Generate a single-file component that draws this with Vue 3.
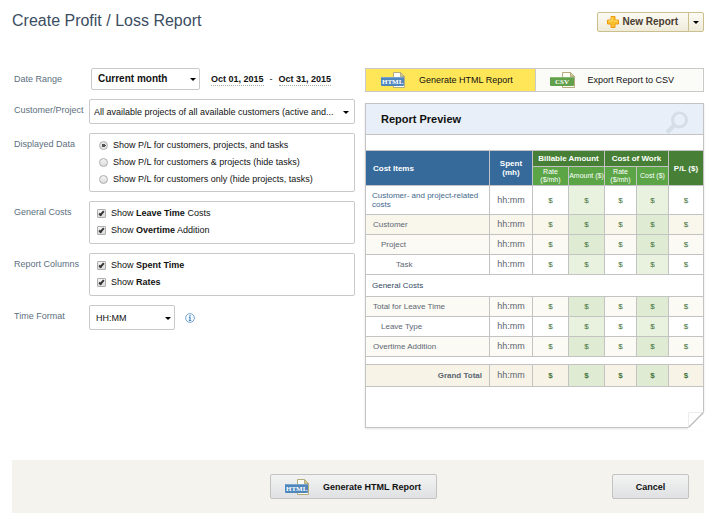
<script setup>
import { ref } from 'vue'

const displayed = ref('tasks')
const displayOptions = [
  { value: 'tasks', label: 'Show P/L for customers, projects, and tasks' },
  { value: 'projects', label: 'Show P/L for customers & projects (hide tasks)' },
  { value: 'customers', label: 'Show P/L for customers only (hide projects, tasks)' }
]
const costs = ref([
  { id: 'leave', strong: 'Leave Time', rest: ' Costs', on: true },
  { id: 'overtime', strong: 'Overtime', rest: ' Addition', on: true }
])
const columns = ref([
  { id: 'spent', strong: 'Spent Time', rest: '', on: true },
  { id: 'rates', strong: 'Rates', rest: '', on: true }
])
const rows = [
  { label: 'Customer- and project-related costs', kind: 'section tall' },
  { label: 'Customer', kind: 'cream' },
  { label: 'Project', kind: 'pale level-1' },
  { label: 'Task', kind: 'level-2' },
  { label: 'General Costs', kind: 'section heading', span: true },
  { label: 'Total for Leave Time', kind: 'pale' },
  { label: 'Leave Type', kind: 'level-1' },
  { label: 'Overtime Addition', kind: 'pale' },
  { label: '', kind: 'spacer', span: true },
  { label: 'Grand Total', kind: 'total' }
]
</script>

<template>
  <div class="page">
    <header class="top">
      <h1>Create Profit / Loss Report</h1>
      <div class="split">
        <button type="button" class="new">
          <svg width="12" height="12" viewBox="0 0 12 12" aria-hidden="true">
            <path d="M4 .5h4v3.500h3.500v4H8v3.500H4V8H.5V4H4z" fill="#fcc02c" stroke="#eb9a14" />
            <path d="M5 1.500v3.500H1.500M7 5h3.500" fill="none" stroke="#ffe27a" />
          </svg>
          New Report
        </button>
        <button type="button" class="more" aria-label="More"><span class="caret"></span></button>
      </div>
    </header>

    <main class="body">
      <form class="form" @submit.prevent>
        <label class="name" for="range">Date Range</label>
        <div class="line">
          <span class="pick range">
            <select id="range"><option>Current month</option></select>
          </span>
          <span class="dates">
            <button type="button" class="date">Oct 01, 2015</button>
            <span>-</span>
            <button type="button" class="date">Oct 31, 2015</button>
          </span>
        </div>

        <label class="name" for="project">Customer/Project</label>
        <span class="pick project">
          <select id="project">
            <option>All available projects of all available customers (active and...</option>
          </select>
        </span>

        <span id="displayed" class="name">Displayed Data</span>
        <div class="box radios" role="radiogroup" aria-labelledby="displayed">
          <label v-for="o in displayOptions" :key="o.value" class="choice">
            <input v-model="displayed" type="radio" name="displayed" :value="o.value" />
            <span>{{ o.label }}</span>
          </label>
        </div>

        <span id="costs" class="name">General Costs</span>
        <div class="box" role="group" aria-labelledby="costs">
          <label v-for="c in costs" :key="c.id" class="choice">
            <input v-model="c.on" type="checkbox" />
            <span>Show <b>{{ c.strong }}</b>{{ c.rest }}</span>
          </label>
        </div>

        <span id="columns" class="name">Report Columns</span>
        <div class="box" role="group" aria-labelledby="columns">
          <label v-for="c in columns" :key="c.id" class="choice">
            <input v-model="c.on" type="checkbox" />
            <span>Show <b>{{ c.strong }}</b>{{ c.rest }}</span>
          </label>
        </div>

        <label class="name" for="format">Time Format</label>
        <div class="line">
          <span class="pick format">
            <select id="format"><option>HH:MM</option></select>
          </span>
          <svg class="info" width="10" height="10" viewBox="0 0 10 10" aria-hidden="true">
            <circle cx="5" cy="5" r="4.4" fill="#f4f9fd" stroke="#6f9fcb" stroke-width=".9" />
            <path d="M5 2v1.3M4 4.4h1V7.4M3.9 7.5h2.3" fill="none" stroke="#4a84bd" stroke-width="1.1" />
          </svg>
        </div>
      </form>

      <section class="side">
        <div class="actions">
          <button type="button" class="html">
            <svg class="file" width="25" height="16" viewBox="0 0 25 16" aria-hidden="true">
              <path d="M12.5.5h7l4 4v11h-11z" fill="#fffef4" stroke="#b5ab7c" />
              <path d="M19.5.5v4h4z" fill="#d8cf9f" stroke="#b5ab7c" />
              <rect x="0" y="5" width="23" height="9" rx="1" fill="#4f87bd" />
              <path d="M1 5.500h21" stroke="#78a5d0" />
              <text x="1" y="12" class="tag">HTML</text>
            </svg>
            <span>Generate HTML Report</span>
          </button>
          <button type="button" class="csv">
            <svg class="file" width="25" height="16" viewBox="0 0 25 16" aria-hidden="true">
              <path d="M12.5.5h8l4 4v11h-12z" fill="#fffef4" stroke="#b5ab7c" />
              <path d="M20.5.5v4h4z" fill="#d8cf9f" stroke="#b5ab7c" />
              <rect x="0" y="5" width="24" height="9" rx="1" fill="#62a04b" />
              <path d="M1 5.500h22" stroke="#86ba70" />
              <text x="5" y="12" class="tag">CSV</text>
            </svg>
            <span>Export Report to CSV</span>
          </button>
        </div>

        <div class="preview">
          <div class="preview-head">
            <h2>Report Preview</h2>
            <svg width="24" height="23" viewBox="0 0 24 23" aria-hidden="true">
              <circle cx="14.5" cy="9" r="7" fill="none" stroke="#d5dde6" stroke-width="3" />
              <path d="M11 5.500a5 5 0 0 1 7-.5" fill="none" stroke="#f1f5fa" />
              <path d="M9.500 14L2 21.500" stroke="#d5dde6" stroke-width="4" />
            </svg>
          </div>
          <table>
            <colgroup>
              <col /><col class="w-spent" /><col class="w-bill" /><col class="w-bill" />
              <col class="w-cost" /><col class="w-cost" /><col class="w-pl" />
            </colgroup>
            <thead>
              <tr class="group">
                <th rowspan="2" class="blue left">Cost Items</th>
                <th rowspan="2" class="blue">Spent<br />(mh)</th>
                <th colspan="2" class="dark">Billable Amount</th>
                <th colspan="2" class="dark">Cost of Work</th>
                <th rowspan="2" class="dark">P/L ($)</th>
              </tr>
              <tr class="sub">
                <th>Rate<br />($/mh)</th>
                <th>Amount ($)</th>
                <th>Rate<br />($/mh)</th>
                <th>Cost ($)</th>
              </tr>
            </thead>
            <tbody>
              <tr v-for="r in rows" :key="r.label" :class="r.kind">
                <td :colspan="r.span ? 7 : 1" class="item">{{ r.label }}</td>
                <template v-if="!r.span">
                  <td class="hours">hh:mm</td>
                  <td v-for="n in 5" :key="n" :class="{ tint: n === 2 || n === 4 }">$</td>
                </template>
              </tr>
            </tbody>
          </table>
          <svg class="fold" width="18" height="18" viewBox="0 0 18 18" aria-hidden="true">
            <path d="M0 0h15L18 0v18H0V15z" fill="#fff" />
            <path d="M.5 15V.5H15" fill="none" stroke="#ececec" />
            <path d="M.5 15.500L15.500 .5" stroke="#b9b9b9" stroke-width="1.300" />
          </svg>
        </div>
      </section>
    </main>

    <footer class="bar">
      <span></span>
      <button type="button" class="soft wide">
        <svg class="file" width="25" height="16" viewBox="0 0 25 16" aria-hidden="true">
          <path d="M12.5.5h7l4 4v11h-11z" fill="#fffef4" stroke="#b5ab7c" />
          <path d="M19.5.5v4h4z" fill="#d8cf9f" stroke="#b5ab7c" />
          <rect x="0" y="5" width="23" height="9" rx="1" fill="#4f87bd" />
          <path d="M1 5.500h21" stroke="#78a5d0" />
          <text x="1" y="12" class="tag">HTML</text>
        </svg>
        <span>Generate HTML Report</span>
      </button>
      <button type="button" class="soft cancel">Cancel</button>
    </footer>
  </div>
</template>

<style>
body {
  background: #fff;
}
</style>

<style scoped>
* {
  box-sizing: border-box;
}
.page {
  padding: 12px 10px 12px 12px;
  font: 9px/12px "Liberation Sans", Arial, sans-serif;
  color: #111;
}
button,
select {
  font: inherit;
  color: inherit;
  margin: 0;
}
.top {
  display: flex;
  justify-content: space-between;
  height: 56px;
}
h1 {
  margin: 0;
  font-size: 16px;
  line-height: 18px;
  font-weight: 400;
  color: #3b4d61;
}
.split {
  display: flex;
  height: 20px;
}
.split button {
  display: flex;
  align-items: center;
  justify-content: center;
  gap: 3px;
  border: 1px solid #cbbf8d;
  background: linear-gradient(#fcfbf4, #efebda);
  padding: 0 10px 0 9px;
  color: #4a3c30;
}
.split .new {
  font-size: 10px;
  font-weight: 700;
  border-radius: 2px 0 0 2px;
}
.split .more {
  width: 16px;
  margin-left: -1px;
  padding: 0;
  border-radius: 0 2px 2px 0;
}
.caret,
.pick::after {
  border: 3px solid transparent;
  border-top-color: #000;
  border-bottom: 0;
}
.body {
  display: flex;
  gap: 10px;
  align-items: flex-start;
}
.form {
  flex: 1 1 343px;
  display: grid;
  grid-template-columns: 75px 1fr;
  column-gap: 2px;
  row-gap: 9px;
}
.name {
  padding-left: 2px;
  line-height: 22px;
  height: 22px;
  color: #5c6f80;
}
.line {
  display: flex;
  align-items: center;
}
.pick {
  position: relative;
  display: block;
}
.pick::after {
  content: "";
  position: absolute;
  right: 4px;
  top: 50%;
  margin-top: -1px;
  pointer-events: none;
}
.project::after {
  right: 6px;
}
select {
  appearance: none;
  display: block;
  width: 100%;
  height: 25px;
  padding: 0 4px;
  border: 1px solid #c9c9c9;
  border-radius: 2px;
  background: #fff;
}
.range {
  width: 109px;
  margin-left: 2px;
}
.range select {
  height: 22px;
  padding: 0 6px;
  font-size: 10px;
  font-weight: 700;
}
.format {
  width: 86px;
}
.format select {
  padding: 0 6px;
}
.info {
  margin-left: 10px;
}
.dates {
  display: flex;
  gap: 6px;
  margin-left: 11px;
}
.date {
  padding: 0;
  border: 0;
  border-bottom: 1px dotted #aaa;
  background: none;
  font-weight: 700;
}
.box {
  padding: 3px 7px 4px;
  border: 1px solid #c9c9c9;
  border-radius: 2px;
}
.radios {
  padding: 3px 9px;
}
.choice {
  display: flex;
  align-items: center;
  gap: 5px;
  height: 17px;
  padding-bottom: 1px;
}
input {
  appearance: none;
  flex: none;
  width: 9px;
  height: 9px;
  margin: 0;
  border: 1px solid #adadad;
  border-radius: 1px;
  background: linear-gradient(#f4f4f4, #dcdcdc);
}
input[type="radio"] {
  border-radius: 50%;
}
input[type="radio"]:checked {
  background: radial-gradient(circle, #555 0 2px, #e4e4e4 2px);
}
input[type="checkbox"]:checked::after {
  content: "";
  display: block;
  width: 1px;
  height: 4px;
  margin: 0 0 0 2px;
  border: solid #333;
  border-width: 0 2px 2px 0;
  transform: rotate(40deg);
}
.side {
  flex: 1 1 339px;
}
.actions {
  display: flex;
  margin-bottom: 11px;
  border: 1px solid #c9c9c9;
}
.actions button {
  flex: 1;
  display: flex;
  align-items: center;
  gap: 13px;
  height: 22px;
  padding: 0 0 0 15px;
  border: 0;
  background: #fbfbf8;
}
.actions .html {
  background: #ffe658;
}
.actions .csv {
  padding-left: 14px;
  border-left: 1px solid #c9c9c9;
}
.file {
  flex: none;
}
.tag {
  font: 700 7px "Liberation Serif", serif;
  fill: #fff;
}
.preview {
  position: relative;
  padding-bottom: 40px;
  border: 1px solid #c3c3c3;
  box-shadow: 0 1px 2px #e4e4e4;
}
.preview-head {
  display: flex;
  justify-content: space-between;
  align-items: center;
  height: 31px;
  margin-bottom: 15px;
  padding: 0 14px 0 15px;
  border-bottom: 1px solid #c3c3c3;
  background: #e8eff8;
}
.preview-head svg {
  align-self: flex-end;
}
h2 {
  margin: 0;
  font-size: 11px;
  font-weight: 700;
}
table {
  width: 100%;
  table-layout: fixed;
  border-collapse: separate;
  border-spacing: 0;
  border-bottom: 1px solid #c3c3c3;
  font-size: 8px;
  line-height: 9px;
}
.w-spent {
  width: 43px;
}
.w-bill {
  width: 36px;
}
.w-cost {
  width: 32px;
}
.w-pl {
  width: 35px;
}
th,
td {
  height: 20px;
  padding: 0;
  border-top: 1px solid #c3c3c3;
  border-left: 1px solid #c3c3c3;
  text-align: center;
  vertical-align: middle;
  color: #3d7139;
}
tr > .item,
tr > .left {
  border-left: 0;
  padding-left: 7px;
  text-align: left;
}
th {
  color: #fff;
  white-space: nowrap;
}
.group th {
  height: 16px;
}
.sub th {
  height: 19px;
  background: #5ba546;
  font-size: 7px;
  font-weight: 400;
  line-height: 8px;
}
.blue {
  background: #356a9b;
}
.dark {
  background: #467f35;
}
td.item {
  color: #5c6672;
}
td.hours {
  font-size: 9px;
  color: #5c6672;
}
.tint {
  background: #e9f2df;
}
.tall td {
  height: 29px;
}
tr.section > .item {
  padding-left: 6px;
  color: #42698d;
}
tr.heading > .item {
  height: 22px;
  color: #34495f;
}
.cream td {
  background: #f9f6ec;
}
.pale td {
  background: #fbfaf4;
}
.total td {
  height: 22px;
  background: #f7f4e7;
  font-weight: 700;
}
.total td.hours {
  font-weight: 400;
}
.cream .tint,
.pale .tint,
.total .tint {
  background: #dfebd3;
}
tr.level-1 > .item {
  padding-left: 15px;
}
tr.level-2 > .item {
  padding-left: 30px;
}
tr.total > .item {
  padding-right: 7px;
  text-align: right;
}
.spacer td {
  height: 8px;
}
.fold {
  position: absolute;
  right: -3px;
  bottom: -3px;
}
.bar {
  display: grid;
  grid-template-columns: 1fr auto 1fr;
  align-items: center;
  height: 53px;
  margin-top: 32px;
  padding: 0 15px 0 5px;
  background: #f4f3ee;
}
.soft {
  display: flex;
  align-items: center;
  justify-content: center;
  gap: 13px;
  height: 25px;
  border: 1px solid #c3c3c3;
  border-radius: 2px;
  background: linear-gradient(#f3f3f3, #dfe1e2);
  font-weight: 700;
}
.wide {
  width: 167px;
}
.cancel {
  justify-self: end;
  width: 77px;
}
</style>
